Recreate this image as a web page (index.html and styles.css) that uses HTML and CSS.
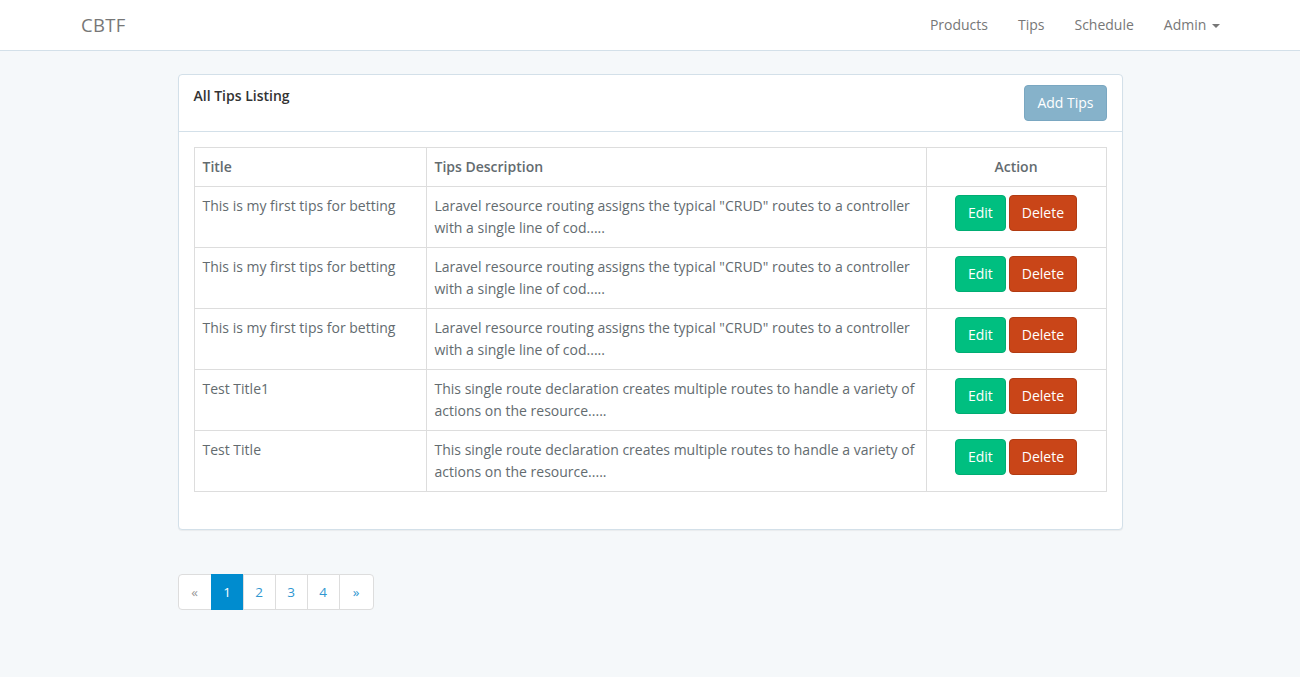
FILE: index.html
```html
<!DOCTYPE html>
<html lang="en">
<head>
<meta charset="utf-8">
<title>CBTF</title>
<link rel="stylesheet" href="styles.css">
</head>
<body>
<nav class="navbar">
  <div class="container nav-inner">
    <a class="brand" href="#">CBTF</a>
    <ul class="nav">
      <li><a href="#">Products</a></li>
      <li><a href="#">Tips</a></li>
      <li><a href="#">Schedule</a></li>
      <li><a href="#">Admin <span class="caret"></span></a></li>
    </ul>
  </div>
</nav>
<main class="content">
  <div class="panel">
    <div class="panel-heading">
      <span class="panel-title">All Tips Listing</span>
      <a class="btn btn-add" href="#">Add Tips</a>
    </div>
    <div class="panel-body">
      <table class="table">
        <thead>
          <tr><th class="c-title">Title</th><th class="c-desc">Tips Description</th><th class="c-action">Action</th></tr>
        </thead>
        <tbody>
          <tr><td>This is my first tips for betting</td><td>Laravel resource routing assigns the typical "CRUD" routes to a controller with a single line of cod.....</td><td class="c-action"><a class="btn btn-edit" href="#">Edit</a><a class="btn btn-delete" href="#">Delete</a></td></tr>
          <tr><td>This is my first tips for betting</td><td>Laravel resource routing assigns the typical "CRUD" routes to a controller with a single line of cod.....</td><td class="c-action"><a class="btn btn-edit" href="#">Edit</a><a class="btn btn-delete" href="#">Delete</a></td></tr>
          <tr><td>This is my first tips for betting</td><td>Laravel resource routing assigns the typical "CRUD" routes to a controller with a single line of cod.....</td><td class="c-action"><a class="btn btn-edit" href="#">Edit</a><a class="btn btn-delete" href="#">Delete</a></td></tr>
          <tr><td>Test Title1</td><td>This single route declaration creates multiple routes to handle a variety of actions on the resource.....</td><td class="c-action"><a class="btn btn-edit" href="#">Edit</a><a class="btn btn-delete" href="#">Delete</a></td></tr>
          <tr><td>Test Title</td><td>This single route declaration creates multiple routes to handle a variety of actions on the resource.....</td><td class="c-action"><a class="btn btn-edit" href="#">Edit</a><a class="btn btn-delete" href="#">Delete</a></td></tr>
        </tbody>
      </table>
    </div>
  </div>
  <ul class="pagination">
    <li><span class="disabled">&laquo;</span></li>
    <li><span class="active">1</span></li>
    <li><a href="#">2</a></li>
    <li><a href="#">3</a></li>
    <li><a href="#">4</a></li>
    <li><a href="#">&raquo;</a></li>
  </ul>
</main>
</body>
</html>
```

FILE: styles.css
```css
* { box-sizing: border-box; }
html, body { margin: 0; padding: 0; }
body {
  background: #f5f8fa;
  font-family: "Open Sans", "Lato", sans-serif;
  font-size: 14px;
  line-height: 1.6;
  color: #636b6f;
  height: 677px;
  overflow: hidden;
}
a { text-decoration: none; }

.navbar {
  background: #fff;
  border-bottom: 1px solid #d3e0e9;
  height: 51px;
}
.container { width: 1170px; margin: 0 auto; padding: 0 15px; }
.nav-inner { display: flex; justify-content: space-between; align-items: center; height: 50px; }
.brand { color: #777; font-size: 18.5px; line-height: 20px; padding: 15px 0 15px 1px; letter-spacing: 0.3px; }
.nav { list-style: none; margin: 0; padding: 0; display: flex; }
.nav a { display: block; color: #777; padding: 14px 15px; line-height: 22px; }
.nav li:last-child a { padding-right: 0; }
.caret {
  display: inline-block; width: 0; height: 0; vertical-align: middle; margin-left: 2px;
  border-top: 4px solid #777; border-left: 4px solid transparent; border-right: 4px solid transparent;
}

.content { width: 945px; margin: 23px auto 0; }
.panel {
  background: #fff;
  border: 1px solid #d3e0e9;
  border-radius: 4px;
  box-shadow: 0 1px 1px rgba(0,0,0,.05);
}
.panel-heading {
  display: flex; justify-content: space-between; align-items: flex-start;
  padding: 10px 15px;
  border-bottom: 1px solid #d3e0e9;
}
.panel-title { font-weight: 600; color: #333; }
.panel-body { padding: 15px; }

.btn {
  display: inline-block; font-size: 14px; line-height: 22px;
  padding: 6px 12px; border: 1px solid transparent; border-radius: 4px; color: #fff;
}
.btn-add { background: #86b2ca; border-color: #7aa7c1; }
.btn-edit { background: #00bf80; border-color: #00ad73; margin-right: 3px; }
.btn-delete { background: #c94518; border-color: #b13b12; }

.table { width: 100%; border-collapse: collapse; margin-bottom: 22px; }
.table th, .table td {
  border: 1px solid #ddd; padding: 8px; text-align: left; vertical-align: top; line-height: 22px;
}
.table th { font-weight: 600; color: #636b6f; }
.c-title { width: 232px; }
.c-desc { width: 500px; }
.table .c-action { text-align: center; }

.pagination { list-style: none; padding: 0; margin: 44px 0 0; display: flex; }
.pagination li > * {
  display: block; padding: 6px 0; line-height: 22px; border: 1px solid #ddd;
  margin-left: -1px; background: #fff; color: #3097d1; width: 33px; text-align: center;
  font-size: 13.5px;
}
.pagination li:first-child > * { margin-left: 0; border-radius: 4px 0 0 4px; width: 34px; }
.pagination li:last-child > * { border-radius: 0 4px 4px 0; width: 35px; }
.pagination .disabled { color: #999; }
.pagination .active { background: #008ccf; border-color: #008ccf; color: #fff; }
```
